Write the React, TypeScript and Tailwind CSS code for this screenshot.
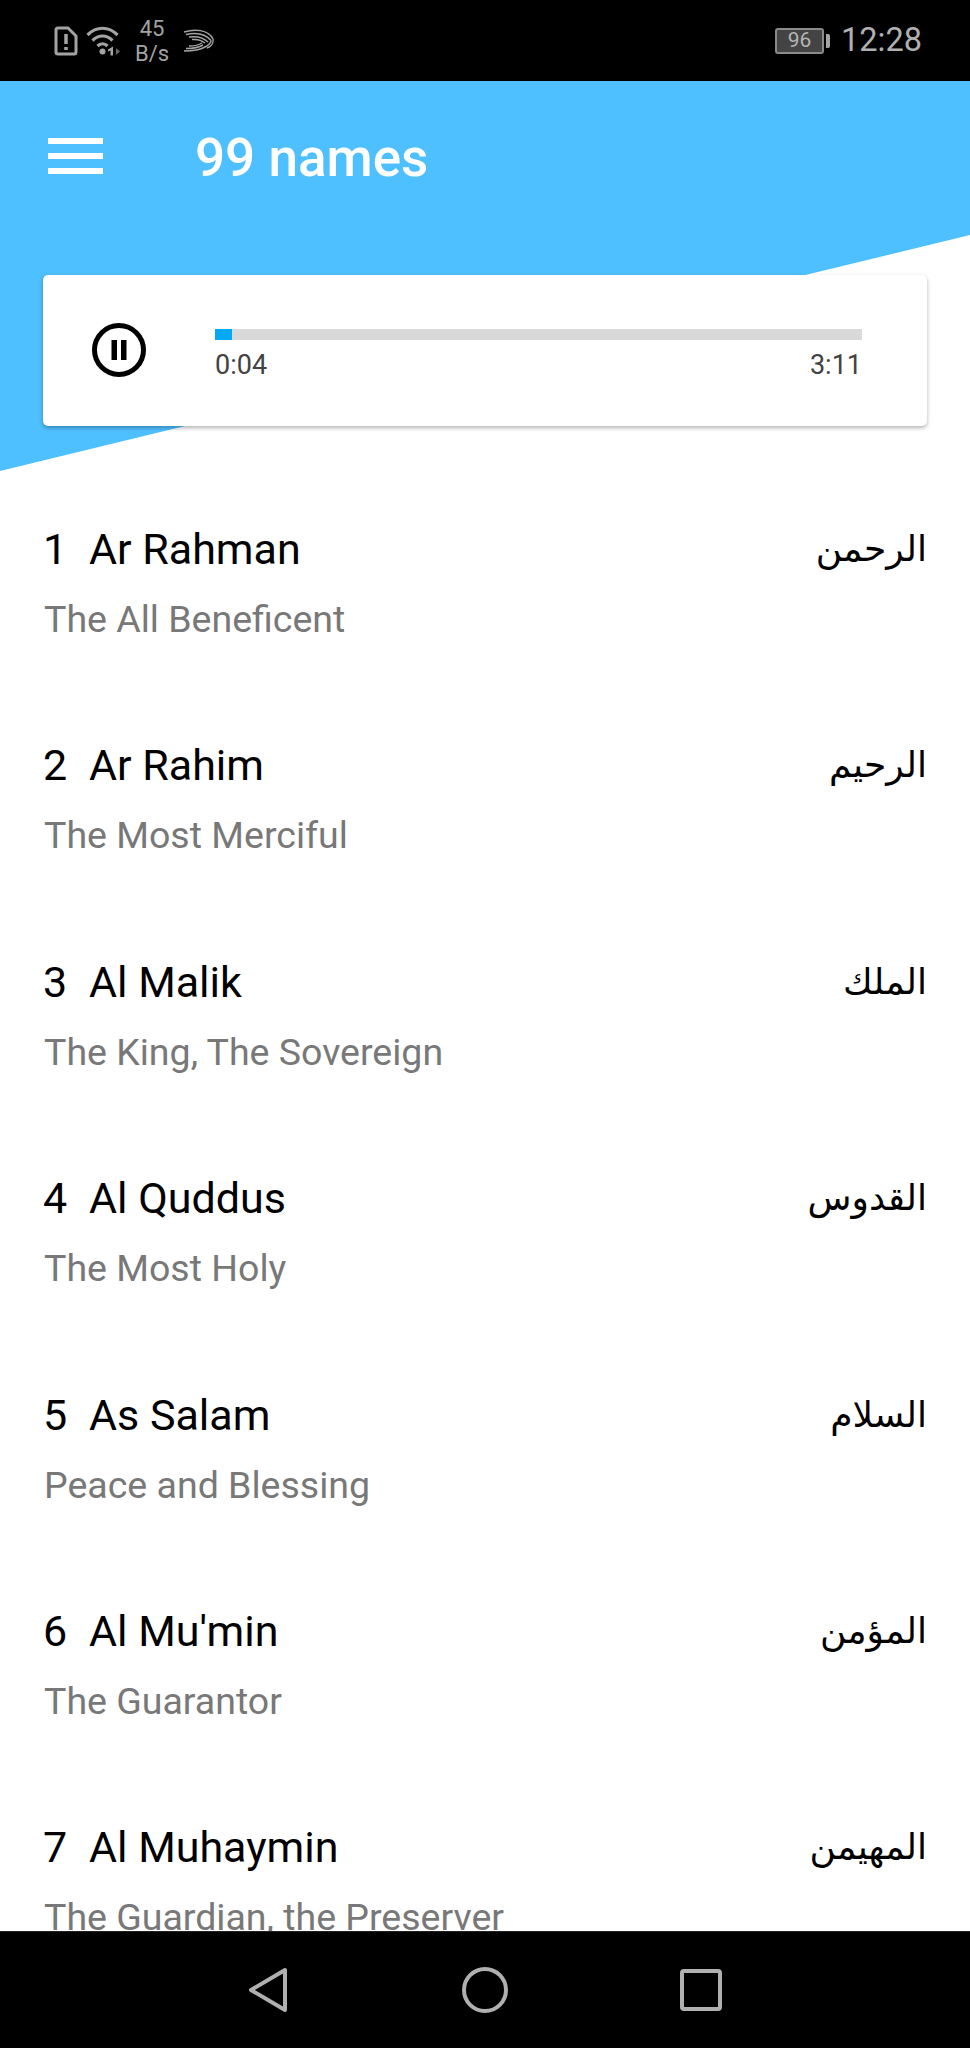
const names = [
  { n: 1, name: "Ar Rahman", arabic: "الرحمن", meaning: "The All Beneficent" },
  { n: 2, name: "Ar Rahim", arabic: "الرحيم", meaning: "The Most Merciful" },
  { n: 3, name: "Al Malik", arabic: "الملك", meaning: "The King, The Sovereign" },
  { n: 4, name: "Al Quddus", arabic: "القدوس", meaning: "The Most Holy" },
  { n: 5, name: "As Salam", arabic: "السلام", meaning: "Peace and Blessing" },
  { n: 6, name: "Al Mu'min", arabic: "المؤمن", meaning: "The Guarantor" },
  { n: 7, name: "Al Muhaymin", arabic: "المهيمن", meaning: "The Guardian, the Preserver" },
]

function StatusBar() {
  return (
    <div className="flex h-[81px] shrink-0 items-center justify-between bg-black pl-[54px] pr-[48px] text-[#a3a3a3]">
      <div className="flex items-center">
        <svg width="24" height="30" viewBox="0 0 24 30" fill="none">
          <path d="M2 4a2 2 0 0 1 2-2h10l8 8v16a2 2 0 0 1-2 2H4a2 2 0 0 1-2-2z" stroke="currentColor" strokeWidth="3" />
          <path d="M12 8v10M12 21v3" stroke="currentColor" strokeWidth="3.5" />
        </svg>
        <svg className="ml-[8px]" width="36" height="30" viewBox="0 0 36 30" fill="none">
          <path d="M1.5 9c9-9 21-9 30 0M6.5 14.500c6-6 14-6 20 0M11.500 20c3-3 7-3 10 0" stroke="currentColor" strokeWidth="3.2" />
          <circle cx="16.500" cy="25.500" r="3" fill="currentColor" />
          <path d="M27 20.500v9h-2.500v-5l-2.500 1v-2z" fill="currentColor" />
          <path d="M30 22l4 3.500-4 3.500z" fill="#666666" />
        </svg>
        <div className="ml-[12px] flex w-[36px] flex-col items-center text-[22px] leading-[25px]">
          <span>45</span>
          <span>B/s</span>
        </div>
        <svg className="ml-[13px]" width="32" height="26" viewBox="0 0 32 26" fill="none">
          <path d="M1 4c10-3 24-3 29 7M3 6.500c9-2 19-1 25 6M6 9c7-1 14 0 19 5M9 11.500c5-.5 10 1 13 3.500" stroke="currentColor" strokeWidth="1.5" />
          <path d="M30 11c1 5-3 8-6 9M28 12.500c0 3-3 5-6 6.500M1 23c8 0 16-1 21-4M3 20.500c7 0 13-1 17-3.500M6 18c5 0 10-1 13-3" stroke="currentColor" strokeWidth="1.5" />
        </svg>
      </div>
      <div className="flex items-center">
        <div className="flex h-[26px] w-[49px] items-center justify-center rounded-[3px] border-2 border-[#8a8a8a] bg-[#444444] text-[21px] leading-none text-[#b5b5b5]">
          96
        </div>
        <div className="ml-[2px] h-[14px] w-[4px] rounded-r-[2px] bg-[#a3a3a3]" />
        <span className="ml-[11px] text-[32.5px] leading-none text-[#b0b0b0]">12:28</span>
      </div>
    </div>
  )
}

function Player() {
  return (
    <div className="mx-[43px] mt-[44px] flex h-[151px] rounded-[5px] bg-white shadow-[0_2px_4px_rgba(0,0,0,0.3)]">
      <svg className="ml-[49px] mt-[48px] shrink-0" width="54" height="54" viewBox="0 0 54 54" fill="none">
        <circle cx="27" cy="27" r="24.5" stroke="black" strokeWidth="5" />
        <path d="M19.500 17h5.500v20h-5.500zM29 17h5.500v20H29z" fill="black" />
      </svg>
      <div className="ml-[69px] mt-[54px] w-[647px]">
        <div className="h-[11px] bg-[#d9d9d9]">
          <div className="h-full w-[17px] bg-[#03a9f4]" />
        </div>
        <div className="mt-[11px] flex justify-between text-[27px] leading-[28px] text-[#424242]">
          <span>0:04</span>
          <span>3:11</span>
        </div>
      </div>
    </div>
  )
}

function NameRow({ item }: { item: (typeof names)[number] }) {
  return (
    <div className="h-[216.4px] shrink-0 px-[43px] pt-[50px]">
      <div className="flex items-center justify-between">
        <div className="text-[43px] leading-[54px] text-black">
          <span className="inline-block w-[46px]">{item.n}</span>
          {item.name}
        </div>
        <div dir="rtl" className="font-['DejaVu_Sans',serif] text-[36px] leading-[54px] text-black">
          {item.arabic}
        </div>
      </div>
      <div className="ml-[1px] mt-[16px] text-[37.5px] leading-[54px] text-[#787878]">{item.meaning}</div>
    </div>
  )
}

function NavBar() {
  return (
    <div className="flex h-[117px] shrink-0 items-center justify-center gap-[172px] border-t border-[#222222] bg-black pb-[1px]">
      <svg width="42" height="46" viewBox="0 0 42 46" fill="none">
        <path d="M37 3 3 23l34 20z" stroke="#b0b0b0" strokeWidth="4" strokeLinejoin="round" />
      </svg>
      <svg width="46" height="46" viewBox="0 0 46 46" fill="none">
        <circle cx="23" cy="23" r="21" stroke="#b0b0b0" strokeWidth="4" />
      </svg>
      <svg width="42" height="42" viewBox="0 0 42 42" fill="none">
        <rect x="2" y="2" width="38" height="38" rx="2" stroke="#b0b0b0" strokeWidth="4" />
      </svg>
    </div>
  )
}

export default function App() {
  return (
    <div className="flex h-[2048px] w-[970px] flex-col overflow-hidden bg-white font-['Roboto',sans-serif]">
      <StatusBar />
      <div className="relative flex-1 overflow-hidden">
        {/* diagonal blue header */}
        <div className="absolute inset-x-0 top-0 h-[390px] bg-[#4fc0ff] [clip-path:polygon(0_0,100%_0,100%_154px,0_100%)]" />
        <div className="relative">
          <div className="flex h-[150px] items-center pl-[48px] text-white">
            <div className="flex w-[55px] flex-col gap-[9px]">
              <div className="h-[6px] bg-white" />
              <div className="h-[6px] bg-white" />
              <div className="h-[6px] bg-white" />
            </div>
            <h1 className="ml-[92px] mt-[5px] text-[53px] font-medium leading-none">99 names</h1>
          </div>
          <Player />
          <div className="mt-[46px]">
            {names.map((item) => (
              <NameRow key={item.n} item={item} />
            ))}
          </div>
        </div>
      </div>
      <NavBar />
    </div>
  )
}
